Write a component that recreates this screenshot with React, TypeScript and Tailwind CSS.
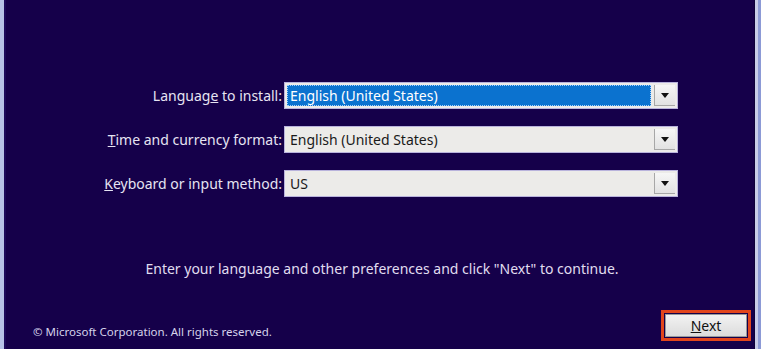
import React from "react";

function Select({ value, active }: { value: string; active?: boolean }) {
  return (
    <div className="flex h-[27px] w-[394px] items-stretch border border-[#b9b3dc] bg-[#ecebe9] p-[2px]">
      <div
        className={
          active
            ? "flex flex-1 items-center border border-dotted border-[#9fd0ff] bg-[#0b72cf] pl-[2px] text-white"
            : "flex flex-1 items-center pl-[3px] text-[#1a1a1a]"
        }
      >
        {value}
      </div>
      <div className="ml-[3px] flex w-[21px] items-center justify-center border-l border-b border-[#a7a7a7] bg-gradient-to-b from-[#f6f6f6] to-[#e2e2e2]">
        <svg width="8" height="5" viewBox="0 0 8 5">
          <path d="M0 0h8L4 5z" fill="#111" />
        </svg>
      </div>
    </div>
  );
}

export default function App() {
  const rows = [
    { label: <>Languag<u>e</u> to install:</>, value: "English (United States)", active: true },
    { label: <><u>T</u>ime and currency format:</>, value: "English (United States)" },
    { label: <><u>K</u>eyboard or input method:</>, value: "US" },
  ];

  return (
    <div
      className="flex h-[349px] w-[761px] overflow-hidden bg-[#15004a] text-[14px]"
      style={{ fontFamily: '"Noto Sans", "Open Sans", sans-serif' }}
    >
      <div className="w-[4px] bg-[#b7c2e6]" />
      <div className="w-[2px] bg-[#1d0a5a]" />
      <main className="flex flex-1 flex-col">
        <div className="mt-[82px] flex flex-col gap-[17px]">
          {rows.map((r, i) => (
            <div key={i} className="flex items-center">
              <div className="w-[278px] pr-[2px] text-right text-[#e6e4f2]">{r.label}</div>
              <Select value={r.value} active={r.active} />
            </div>
          ))}
        </div>
        <p className="mt-[61px] pl-[4px] text-center text-[14px] text-[#e0ddf0]">
          Enter your language and other preferences and click "Next" to continue.
        </p>
        <div className="mt-auto mb-[8px] flex items-end justify-between">
          <span className="mb-[1px] ml-[27px] text-[11.5px] text-[#d6d3ea]">
            © Microsoft Corporation. All rights reserved.
          </span>
          <div className="mr-[3px] border-[3px] border-[#e2451c] p-[1px]">
            <button className="h-[23px] w-[82px] border border-[#9a9a9a] bg-gradient-to-b from-[#f2f2f2] to-[#dcdcdc] text-[14px] text-[#111]">
              <u>N</u>ext
            </button>
          </div>
        </div>
      </main>
      <div className="w-[1px] bg-[#0e0038]" />
      <div className="w-[3px] bg-[#c8cce8]" />
      <div className="w-[3px] bg-[#8c9ad6]" />
    </div>
  );
}
